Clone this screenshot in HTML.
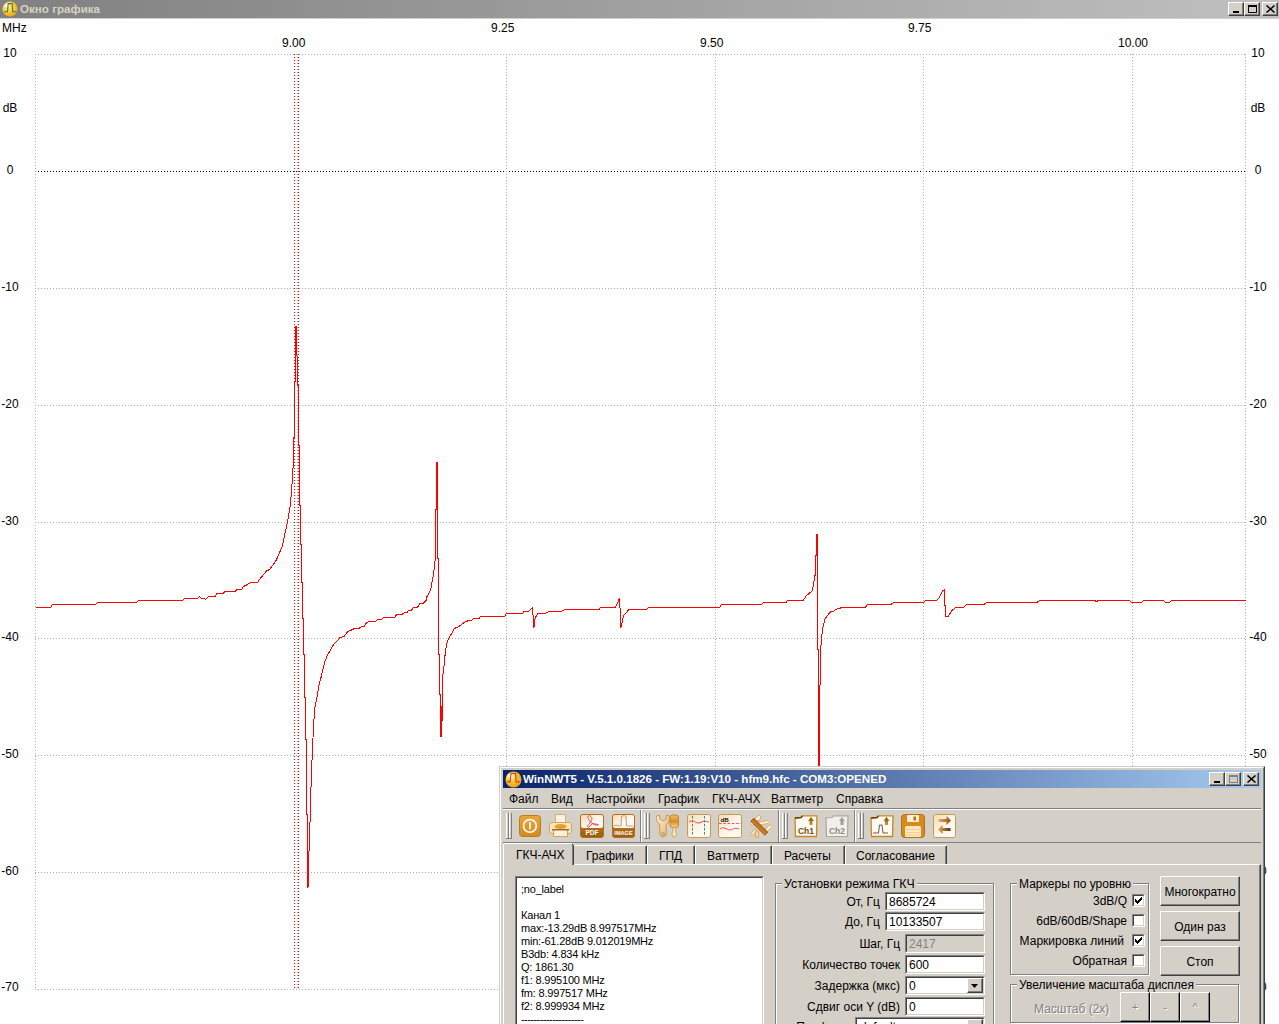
<!DOCTYPE html>
<html><head><meta charset="utf-8">
<style>
*{margin:0;padding:0;box-sizing:border-box}
html,body{width:1279px;height:1024px;overflow:hidden;background:#fff;font-family:"Liberation Sans",sans-serif;color:#000}
.a{position:absolute;white-space:nowrap}
.lbl{position:absolute;font-size:12px;line-height:14px;width:30px;text-align:center}
.dlg{position:absolute;left:499px;top:766px;width:766px;height:300px;background:#d4d0c8;
 border-top:1px solid #d4d0c8;border-left:1px solid #d4d0c8;border-right:1px solid #404040;border-bottom:1px solid #404040}
.dlg .in{position:absolute;left:0;top:0;right:0;bottom:0;border-top:1px solid #fff;border-left:1px solid #fff;border-right:1px solid #808080;border-bottom:1px solid #808080}
.t12{font-size:12px;line-height:14px}
.btn{position:absolute;background:#d4d0c8;border-top:1px solid #fff;border-left:1px solid #fff;border-right:1px solid #404040;border-bottom:1px solid #404040}
.btn>i{position:absolute;left:0;top:0;right:0;bottom:0;border-right:1px solid #808080;border-bottom:1px solid #808080}
.edit{position:absolute;background:#fff;border-top:1px solid #808080;border-left:1px solid #808080;border-right:1px solid #fff;border-bottom:1px solid #fff}
.edit>i{position:absolute;left:0;top:0;right:0;bottom:0;border-top:1px solid #404040;border-left:1px solid #404040;border-right:1px solid #d4d0c8;border-bottom:1px solid #d4d0c8}
.grp{position:absolute;border:1px solid #808080;box-shadow:1px 1px 0 #fff inset, 1px 1px 0 #fff}
.grpt{position:absolute;background:#d4d0c8;padding:0 2px;font-size:12px;line-height:14px}
.chk{position:absolute;width:13px;height:13px;background:#fff;border-top:1px solid #808080;border-left:1px solid #808080;border-right:1px solid #fff;border-bottom:1px solid #fff}
.chk>i{position:absolute;left:0;top:0;right:0;bottom:0;border-top:1px solid #404040;border-left:1px solid #404040;border-right:1px solid #d4d0c8;border-bottom:1px solid #d4d0c8}
</style></head><body>
<!-- chart window title bar -->
<div class="a" style="left:0;top:0;width:1279px;height:18px;background:linear-gradient(to right,#808080,#c0c0c0)"></div>
<div class="a" style="left:0;top:18px;width:1279px;height:1px;background:#d4d0c8"></div>
<svg class="a" style="left:2px;top:1px" width="16" height="16" viewBox="0 0 16 16">
<defs><radialGradient id="yg" cx="0.35" cy="0.3" r="0.75"><stop offset="0" stop-color="#fff0b0"/><stop offset="0.55" stop-color="#fcc83a"/><stop offset="1" stop-color="#e8a018"/></radialGradient></defs>
<circle cx="8" cy="8" r="7.6" fill="url(#yg)"/>
<ellipse cx="4.8" cy="4.6" rx="2.2" ry="1.8" fill="#fffbe8" opacity="0.8"/><path d="M2,10.8 H5.5 L6.2,2.6 H10.3 L10.6,10.8 H14.6" fill="none" stroke="#2f8a3a" stroke-width="1.1"/>
</svg>
<div class="a" style="left:20px;top:2px;font-size:11.6px;line-height:14px;font-weight:bold;color:#d8d2c4">Окно графика</div>
<div class="btn" style="left:1228px;top:2px;width:16px;height:14px"><i></i><div class="a" style="left:4px;top:8px;width:6px;height:2px;background:#000"></div></div>
<div class="btn" style="left:1244px;top:2px;width:16px;height:14px"><i></i><div class="a" style="left:3px;top:2px;width:9px;height:8px;border:1px solid #000;border-top-width:2px"></div></div>
<div class="btn" style="left:1262px;top:2px;width:16px;height:14px"><i></i><svg class="a" style="left:3px;top:2px" width="9" height="8"><path d="M0.5,0.5 L8.5,7.5 M8.5,0.5 L0.5,7.5" stroke="#000" stroke-width="1.5"/></svg></div>
<!-- axis labels -->
<div class="a" style="left:2px;top:21px;font-size:12px;line-height:14px">MHz</div>
<div class="lbl" style="left:-5px;top:46px">10</div>
<div class="lbl" style="left:-5px;top:101px">dB</div>
<div class="lbl" style="left:-5px;top:163px">0</div>
<div class="lbl" style="left:-5px;top:280px">-10</div>
<div class="lbl" style="left:-5px;top:397px">-20</div>
<div class="lbl" style="left:-5px;top:514px">-30</div>
<div class="lbl" style="left:-5px;top:630px">-40</div>
<div class="lbl" style="left:-5px;top:747px">-50</div>
<div class="lbl" style="left:-5px;top:864px">-60</div>
<div class="lbl" style="left:-5px;top:980px">-70</div>
<div class="lbl" style="left:1243px;top:46px">10</div>
<div class="lbl" style="left:1243px;top:101px">dB</div>
<div class="lbl" style="left:1243px;top:163px">0</div>
<div class="lbl" style="left:1243px;top:280px">-10</div>
<div class="lbl" style="left:1243px;top:397px">-20</div>
<div class="lbl" style="left:1243px;top:514px">-30</div>
<div class="lbl" style="left:1243px;top:630px">-40</div>
<div class="lbl" style="left:1243px;top:747px">-50</div>
<div class="lbl" style="left:1243px;top:864px">-60</div>
<div class="lbl" style="left:1243px;top:980px">-70</div>
<div class="a" style="left:282px;top:36px;font-size:12px;line-height:14px">9.00</div>
<div class="a" style="left:491px;top:21px;font-size:12px;line-height:14px">9.25</div>
<div class="a" style="left:700px;top:36px;font-size:12px;line-height:14px">9.50</div>
<div class="a" style="left:908px;top:21px;font-size:12px;line-height:14px">9.75</div>
<div class="a" style="left:1118px;top:36px;font-size:12px;line-height:14px">10.00</div>
<svg width="1279" height="1024" style="position:absolute;left:0;top:0" shape-rendering="crispEdges">
<line x1="35" y1="54.5" x2="1246" y2="54.5" stroke="#acacac" stroke-width="1" stroke-dasharray="1 2"/>
<line x1="35" y1="171.5" x2="1246" y2="171.5" stroke="#000" stroke-width="1" stroke-dasharray="1 2"/>
<line x1="35" y1="288.5" x2="1246" y2="288.5" stroke="#acacac" stroke-width="1" stroke-dasharray="1 2"/>
<line x1="35" y1="405.5" x2="1246" y2="405.5" stroke="#acacac" stroke-width="1" stroke-dasharray="1 2"/>
<line x1="35" y1="522.5" x2="1246" y2="522.5" stroke="#acacac" stroke-width="1" stroke-dasharray="1 2"/>
<line x1="35" y1="638.5" x2="1246" y2="638.5" stroke="#acacac" stroke-width="1" stroke-dasharray="1 2"/>
<line x1="35" y1="755.5" x2="1246" y2="755.5" stroke="#acacac" stroke-width="1" stroke-dasharray="1 2"/>
<line x1="35" y1="872.5" x2="1246" y2="872.5" stroke="#acacac" stroke-width="1" stroke-dasharray="1 2"/>
<line x1="35" y1="989.5" x2="1246" y2="989.5" stroke="#acacac" stroke-width="1" stroke-dasharray="1 2"/>
<line x1="35.5" y1="54" x2="35.5" y2="990" stroke="#acacac" stroke-width="1" stroke-dasharray="1 2"/>
<line x1="297.5" y1="54" x2="297.5" y2="990" stroke="#acacac" stroke-width="1" stroke-dasharray="1 2"/>
<line x1="506.5" y1="54" x2="506.5" y2="990" stroke="#acacac" stroke-width="1" stroke-dasharray="1 2"/>
<line x1="715.5" y1="54" x2="715.5" y2="990" stroke="#acacac" stroke-width="1" stroke-dasharray="1 2"/>
<line x1="923.5" y1="54" x2="923.5" y2="990" stroke="#acacac" stroke-width="1" stroke-dasharray="1 2"/>
<line x1="1132.5" y1="54" x2="1132.5" y2="990" stroke="#acacac" stroke-width="1" stroke-dasharray="1 2"/>
<line x1="1245.5" y1="54" x2="1245.5" y2="990" stroke="#acacac" stroke-width="1" stroke-dasharray="1 2"/>
<line x1="294.5" y1="54" x2="294.5" y2="988" stroke="#f00" stroke-width="1" stroke-dasharray="1 2"/>
<line x1="298.5" y1="54" x2="298.5" y2="988" stroke="#f00" stroke-width="1" stroke-dasharray="1 2"/>
<path d="M35.5,607.5 L50.5,607.5 L52.5,604.5 L95.5,604.5 L97.5,602.5 L136.5,602.5 L138.5,600.5 L182.5,600.5 L184.5,598.5 L197.5,598.5 L199.5,596.5 L201.5,598.5 L204.5,598.5 L205.5,599.5 L208.5,596.5 L215.5,596.5 L216.5,593.5 L223.5,593.5 L224.5,591.5 L235.5,591.5 L236.5,589.5 L241.5,589.5 L243.5,586.5 L247.5,584.5 L250.5,582.5 L257.5,582.5 L259.5,579.5 L266.5,571.0 L269.5,569.5 L275.5,561.5 L277.5,557.5 L282.1,546.5 L283.5,540.5 L285.2,532.5 L287.5,521.5 L289.1,512.5 L290.5,503.5 L291.5,491.5 L292.5,477.5 L293.5,458.5 L293.5,437.5 L294.5,437.5 L294.5,381.5 L295.5,381.5 L295.5,326.5 L296.5,326.5 L296.5,355.5 L297.5,356.5 L297.5,385.5 L298.5,385.5 L298.5,445.5 L299.5,445.5 L299.5,505.5 L300.5,505.5 L300.5,544.5 L301.5,544.5 L301.5,582.5 L302.5,582.5 L302.5,618.5 L303.5,618.5 L303.5,654.5 L304.5,654.5 L304.5,697.5 L305.5,697.5 L305.5,739.5 L306.5,739.5 L306.5,814.5 L307.5,814.5 L307.5,887.5 L308.5,886.5 L308.5,863.5 L309.5,839.5 L310.5,806.5 L311.5,769.5 L312.5,751.5 L313.5,724.5 L315.0,707.5 L316.9,697.5 L319.1,684.5 L321.0,677.5 L322.9,669.5 L325.1,661.0 L327.8,654.5 L333.3,645.1 L340.1,637.5 L344.0,636.5 L347.9,631.5 L351.5,630.0 L355.7,628.0 L359.7,628.0 L362.0,626.1 L364.3,626.1 L366.3,622.9 L369.8,621.0 L376.1,621.0 L378.0,619.0 L381.9,619.0 L383.9,617.1 L394.8,617.1 L397.2,614.0 L402.7,614.0 L405.0,612.0 L407.3,612.0 L408.9,610.0 L411.6,610.0 L413.2,607.9 L417.1,607.9 L420.2,603.0 L423.4,603.0 L426.1,600.3 L426.9,596.8 L430.5,590.5 L433.3,575.5 L434.5,566.5 L435.5,555.5 L435.5,509.5 L436.5,509.5 L436.5,462.5 L437.5,462.5 L437.5,558.5 L438.5,558.5 L438.5,654.5 L439.5,654.5 L439.5,694.5 L440.5,694.5 L440.5,736.5 L441.5,736.5 L442.5,706.5 L442.5,677.5 L444.0,666.5 L445.1,654.5 L446.5,644.5 L448.5,638.5 L450.5,635.5 L454.5,628.5 L457.5,627.1 L460.5,625.5 L464.2,622.5 L467.5,621.0 L471.5,620.5 L473.5,618.5 L479.0,618.5 L480.5,616.5 L504.5,616.5 L506.5,613.5 L522.5,613.5 L524.0,611.5 L528.5,611.5 L532.5,607.5 L533.9,627.5 L535.2,617.5 L538.1,613.5 L545.5,613.5 L548.5,611.5 L561.5,611.5 L564.5,609.5 L599.0,609.5 L600.5,607.5 L615.5,607.5 L619.5,598.5 L621.0,627.5 L623.5,615.5 L629.1,609.5 L646.5,609.5 L648.5,607.5 L719.5,607.5 L721.5,604.5 L761.5,604.5 L763.5,602.5 L786.0,602.5 L787.5,600.5 L803.2,600.5 L806.5,595.5 L812.1,591.1 L813.5,584.2 L814.8,576.0 L815.5,574.5 L815.5,555.5 L816.5,555.5 L816.5,534.5 L817.5,534.5 L817.5,649.5 L818.5,649.5 L818.5,800.5 L819.5,800.5 L819.5,705.5 L821.0,645.5 L821.7,636.2 L823.0,627.3 L824.8,619.1 L829.9,612.2 L834.0,610.9 L835.3,609.5 L842.3,607.5 L865.2,607.5 L867.5,604.5 L891.0,604.5 L893.3,602.5 L923.8,602.5 L925.8,600.5 L936.3,600.5 L939.5,597.5 L942.5,590.5 L944.9,589.5 L944.9,603.5 L945.7,616.5 L948.0,616.5 L951.9,610.5 L955.8,607.5 L963.5,607.5 L966.8,604.5 L983.9,604.5 L986.3,602.5 L1037.1,602.5 L1039.5,600.5 L1094.5,600.5 L1096.5,601.5 L1098.5,600.5 L1129.5,600.5 L1131.5,602.5 L1141.5,602.5 L1143.5,600.5 L1163.5,600.5 L1165.5,602.5 L1169.5,602.5 L1171.5,600.5 L1245.5,600.5" fill="none" stroke="#f00" stroke-width="1" shape-rendering="crispEdges"/>
<rect x="295" y="326" width="2" height="30" fill="#f00"/>
<rect x="436" y="462" width="2" height="47" fill="#f00"/>
<rect x="816" y="534" width="2" height="21" fill="#f00"/>
<rect x="440" y="706" width="2" height="31" fill="#f00"/>
</svg><div class="a" style="left:499px;top:766px;width:766px;height:260px;background:#d4d0c8;border-left:1px solid #d4d0c8;border-top:1px solid #d4d0c8;border-right:1px solid #404040"></div>
<div class="a" style="left:500px;top:767px;width:764px;height:260px;background:#d4d0c8;border-left:1px solid #fff;border-top:1px solid #fff;border-right:1px solid #808080"></div>
<div class="a" style="left:503px;top:770px;width:758px;height:18px;background:linear-gradient(to right,#0a246a,#a6caf0);"></div>
<svg class="a" style="left:505px;top:771px" width="17" height="17" viewBox="0 0 17 17">
<defs><radialGradient id="og" cx="0.35" cy="0.3" r="0.8"><stop offset="0" stop-color="#fff8d0"/><stop offset="0.45" stop-color="#fcc030"/><stop offset="1" stop-color="#e4a012"/></radialGradient></defs>
<circle cx="8.5" cy="8.5" r="8" fill="url(#og)"/>
<ellipse cx="5" cy="5" rx="2.3" ry="1.9" fill="#fffbe8" opacity="0.8"/><path d="M2,10.8 H5 L6,2.4 H10.5 L11.1,10.8 H14.8" fill="none" stroke="#c0502a" stroke-width="1.2"/>
</svg>
<div class="a" style="left:523px;top:772px;font-size:11.6px;line-height:14px;font-weight:bold;color:#fff">WinNWT5 - V.5.1.0.1826 - FW:1.19:V10 - hfm9.hfc - COM3:OPENED</div>
<div class="btn" style="left:1209px;top:772px;width:16px;height:14px"><i></i><div class="a" style="left:4px;top:8px;width:6px;height:2px;background:#000"></div></div>
<div class="btn" style="left:1225px;top:772px;width:16px;height:14px"><i></i><div class="a" style="left:3px;top:2px;width:9px;height:8px;border:1px solid #808080;border-top-width:2px"></div></div>
<div class="btn" style="left:1243px;top:772px;width:16px;height:14px"><i></i><svg class="a" style="left:3px;top:2px" width="9" height="8"><path d="M0.5,0.5 L8.5,7.5 M8.5,0.5 L0.5,7.5" stroke="#000" stroke-width="1.5"/></svg></div>
<div class="a" style="left:509px;top:792px;font-size:12px;line-height:14px;">Файл</div>
<div class="a" style="left:551px;top:792px;font-size:12px;line-height:14px;">Вид</div>
<div class="a" style="left:586px;top:792px;font-size:12px;line-height:14px;">Настройки</div>
<div class="a" style="left:658px;top:792px;font-size:12px;line-height:14px;">График</div>
<div class="a" style="left:712px;top:792px;font-size:12px;line-height:14px;">ГКЧ-АЧХ</div>
<div class="a" style="left:771px;top:792px;font-size:12px;line-height:14px;">Ваттметр</div>
<div class="a" style="left:836px;top:792px;font-size:12px;line-height:14px;">Справка</div>
<div class="a" style="left:503px;top:808px;width:758px;height:1px;background:#808080;"></div>
<div class="a" style="left:503px;top:809px;width:758px;height:1px;background:#fff;"></div>
<div class="a" style="left:503px;top:842px;width:758px;height:1px;background:#808080;"></div>
<div class="a" style="left:640px;top:810px;width:1px;height:32px;background:#808080;"></div>
<div class="a" style="left:641px;top:810px;width:1px;height:32px;background:#fff;"></div>
<div class="a" style="left:778px;top:810px;width:1px;height:32px;background:#808080;"></div>
<div class="a" style="left:779px;top:810px;width:1px;height:32px;background:#fff;"></div>
<div class="a" style="left:854px;top:810px;width:1px;height:32px;background:#808080;"></div>
<div class="a" style="left:855px;top:810px;width:1px;height:32px;background:#fff;"></div>
<div class="a" style="left:506px;top:813px;width:1px;height:25px;background:#fff;"></div>
<div class="a" style="left:508px;top:813px;width:1px;height:26px;background:#808080;"></div>
<div class="a" style="left:506px;top:838px;width:3px;height:1px;background:#808080;"></div>
<div class="a" style="left:509px;top:813px;width:1px;height:25px;background:#fff;"></div>
<div class="a" style="left:511px;top:813px;width:1px;height:26px;background:#808080;"></div>
<div class="a" style="left:509px;top:838px;width:3px;height:1px;background:#808080;"></div>
<div class="a" style="left:644px;top:813px;width:1px;height:25px;background:#fff;"></div>
<div class="a" style="left:646px;top:813px;width:1px;height:26px;background:#808080;"></div>
<div class="a" style="left:644px;top:838px;width:3px;height:1px;background:#808080;"></div>
<div class="a" style="left:647px;top:813px;width:1px;height:25px;background:#fff;"></div>
<div class="a" style="left:649px;top:813px;width:1px;height:26px;background:#808080;"></div>
<div class="a" style="left:647px;top:838px;width:3px;height:1px;background:#808080;"></div>
<div class="a" style="left:782px;top:813px;width:1px;height:25px;background:#fff;"></div>
<div class="a" style="left:784px;top:813px;width:1px;height:26px;background:#808080;"></div>
<div class="a" style="left:782px;top:838px;width:3px;height:1px;background:#808080;"></div>
<div class="a" style="left:785px;top:813px;width:1px;height:25px;background:#fff;"></div>
<div class="a" style="left:787px;top:813px;width:1px;height:26px;background:#808080;"></div>
<div class="a" style="left:785px;top:838px;width:3px;height:1px;background:#808080;"></div>
<div class="a" style="left:858px;top:813px;width:1px;height:25px;background:#fff;"></div>
<div class="a" style="left:860px;top:813px;width:1px;height:26px;background:#808080;"></div>
<div class="a" style="left:858px;top:838px;width:3px;height:1px;background:#808080;"></div>
<div class="a" style="left:861px;top:813px;width:1px;height:25px;background:#fff;"></div>
<div class="a" style="left:863px;top:813px;width:1px;height:26px;background:#808080;"></div>
<div class="a" style="left:861px;top:838px;width:3px;height:1px;background:#808080;"></div><svg width="0" height="0" style="position:absolute"><defs>
<linearGradient id="gOr" x1="0" y1="0" x2="0" y2="1"><stop offset="0" stop-color="#e8a73a"/><stop offset="1" stop-color="#d48a1c"/></linearGradient>
<linearGradient id="gCr" x1="0" y1="0" x2="1" y2="1"><stop offset="0" stop-color="#f6dcb0"/><stop offset="0.6" stop-color="#fff8f0"/><stop offset="1" stop-color="#fffaf5"/></linearGradient>
<linearGradient id="gBr" x1="0" y1="0" x2="0" y2="1"><stop offset="0" stop-color="#d08a28"/><stop offset="1" stop-color="#9a5c10"/></linearGradient>
<linearGradient id="gTool" x1="0" y1="0" x2="1" y2="1"><stop offset="0" stop-color="#fff4e0"/><stop offset="1" stop-color="#e8b060"/></linearGradient>
<linearGradient id="gHandle" x1="0" y1="0" x2="0" y2="1"><stop offset="0" stop-color="#f0c070"/><stop offset="0.5" stop-color="#d8901c"/><stop offset="1" stop-color="#f4d090"/></linearGradient>
<linearGradient id="gArr" x1="0" y1="0" x2="1" y2="0"><stop offset="0" stop-color="#e8b060"/><stop offset="1" stop-color="#8a5010"/></linearGradient>
<linearGradient id="gArr2" x1="1" y1="0" x2="0" y2="0"><stop offset="0" stop-color="#5a3008"/><stop offset="1" stop-color="#e8b060"/></linearGradient>
<linearGradient id="gArrU" x1="0" y1="0" x2="0" y2="1"><stop offset="0" stop-color="#7a4a10"/><stop offset="1" stop-color="#e09a30"/></linearGradient>
</defs></svg>
<svg class="a" style="left:519px;top:815px" width="22" height="22" viewBox="0 0 22 22"><rect x="0.5" y="0.5" width="21" height="21" rx="3" fill="url(#gOr)" stroke="#c07a18"/><circle cx="10.9" cy="10.9" r="6.4" fill="none" stroke="#fff" stroke-width="1.6"/><rect x="10.2" y="6.8" width="1.6" height="7.6" fill="#fff"/></svg>
<svg class="a" style="left:549px;top:814px" width="23" height="23" viewBox="0 0 23 23"><rect x="6.5" y="0.5" width="10" height="10" fill="#fff4e4" stroke="#e0b070"/><rect x="0.5" y="8.5" width="22" height="11" rx="2.5" fill="#fbe6c4" stroke="#e0a050"/><ellipse cx="11.5" cy="12.5" rx="6" ry="2.5" fill="#e3a030"/><rect x="4.5" y="15.5" width="14" height="7" fill="#fff0dc" stroke="#d8a050"/><rect x="3" y="15" width="17" height="1.5" fill="#9a6a30"/></svg>
<svg class="a" style="left:580px;top:814px" width="24" height="24" viewBox="0 0 24 24"><rect x="0.5" y="0.5" width="23" height="23" rx="2.5" fill="url(#gBr)" stroke="#b07020"/><rect x="1" y="1" width="22" height="13" rx="2" fill="url(#gCr)"/><path d="M8.5,2 C7,3 8.5,6 11.5,9 L15,11 C17,11 19.5,11.5 18,10.5 L12.5,9.5 L9,13 C8,14 6,13 10,9 L12,5 C12,3 10,1 8.5,2" fill="none" stroke="#e8404a" stroke-width="0.9"/><text x="12" y="21.3" font-family="Liberation Sans" font-weight="bold" font-size="6.5" fill="#fff" text-anchor="middle">PDF</text></svg>
<svg class="a" style="left:612px;top:814px" width="23" height="24" viewBox="0 0 23 24"><rect x="0.5" y="0.5" width="22" height="23" rx="2.5" fill="url(#gBr)" stroke="#b07020"/><rect x="1" y="1" width="21" height="13" rx="2" fill="url(#gCr)"/><path d="M1.5,12 L4,11 L7,12 L9,12 L9.5,2.5 L12,1.5 L14,2.5 L14.5,12 L16.5,12 L19,12 L21,12" fill="none" stroke="#b89870" stroke-width="0.9"/><text x="11.5" y="21.3" font-family="Liberation Sans" font-weight="bold" font-size="5.6" fill="#fff" text-anchor="middle">IMAGE</text></svg>
<svg class="a" style="left:656px;top:814px" width="24" height="24" viewBox="0 0 24 24"><path d="M1.2,1.5 C-0.2,5.5 1,9 3.8,10.2 L3.8,20 C3.8,23.8 10.2,23.8 10.2,20 L10.2,10.2 C13,9 14,5.5 12.8,1.5 L10.3,1.5 L10.3,5.2 L7,7 L3.7,5.2 L3.7,1.5 Z" fill="url(#gTool)" stroke="#c89040" stroke-width="0.9"/><circle cx="7" cy="20" r="1.3" fill="#fff6e8" stroke="#a07030" stroke-width="0.8"/><rect x="14" y="1" width="8.5" height="12.5" rx="2.5" fill="url(#gHandle)" stroke="#c08028" stroke-width="0.9"/><path d="M16.8,13.5 L16.8,17.5 L15.8,19.5 L16.8,23 L19.7,23 L20.7,19.5 L19.7,17.5 L19.7,13.5 Z" fill="#f8e2b8" stroke="#c89a50" stroke-width="0.8"/></svg>
<svg class="a" style="left:687px;top:814px" width="24" height="24" viewBox="0 0 24 24"><rect x="0.5" y="0.5" width="23" height="23" rx="2" fill="url(#gCr)" stroke="#c89a50"/><path d="M5.5,2 V22 M17.5,2 V22" stroke="#3a9060" stroke-width="1" stroke-dasharray="2.5 1.5"/><path d="M2,8 C5,6 7,7 9,8.5 C12,10 14,8 17,7 C19,7 20,8 22,8" fill="none" stroke="#e85060" stroke-width="1"/></svg>
<svg class="a" style="left:718px;top:814px" width="24" height="24" viewBox="0 0 24 24"><rect x="0.5" y="0.5" width="23" height="23" rx="2" fill="url(#gCr)" stroke="#c89a50"/><text x="2.5" y="7.5" font-family="Liberation Sans" font-weight="bold" font-size="6.2" fill="#111">dB</text><path d="M1,9.5 H23" stroke="#e85060" stroke-width="1" stroke-dasharray="2.5 1.8"/><path d="M2,15 C4,13.5 6,13.5 9,15 C11,16.5 13,16 15,15 C17,14 19,14 21,15" fill="none" stroke="#e85060" stroke-width="1"/></svg>
<svg class="a" style="left:749px;top:814px" width="24" height="24" viewBox="0 0 24 24"><path d="M10,0.8 L1.5,9.5 L3.5,11.5 L9,6 L10.5,6.5 L12,3 Z" fill="#fff4e6" stroke="#e0a050" stroke-width="0.9"/><path d="M8.5,8.5 L19.5,6.5 L21,8 L19,9.5 L10,11 Z" fill="#fff6ea" stroke="#e0a050" stroke-width="0.8"/><path d="M5,15 L1,21.5 L3,22 L7.5,17 Z" fill="#fde8c8" stroke="#e0a050" stroke-width="0.8"/><path d="M6.5,17 L6.5,23.5 L9.5,23.5 L9.5,17 Z" fill="#f6d498" stroke="#e0a050" stroke-width="0.8"/><path d="M15.5,20.5 L23,12.5 L21.5,11 L19,12 L17.5,14.5 L14.5,18 Z" fill="#fff4e6" stroke="#e0a050" stroke-width="0.8"/><path d="M1.8,7.2 L4.8,4.2 L18.8,18.2 L15.8,21.2 Z" fill="#c0701a" stroke="#9a5408" stroke-width="0.9" stroke-linejoin="round"/><path d="M3.5,7 L17,20.5" stroke="#e09848" stroke-width="0.8"/></svg>
<svg class="a" style="left:794px;top:815px" width="24" height="24" viewBox="0 0 24 24"><path d="M1,3 L7,2.5 L8.5,0.8 L23,0.8 L22.5,21.5 L1.5,21.5 Z" fill="#fffaf4" stroke="#c8881c" stroke-width="1.3"/><path d="M1,3 L7,2.5 L8.5,0.8" fill="none" stroke="#6a3a08" stroke-width="1.3"/><path d="M17,2 L20,6 L18.5,6 L18.5,10 L15.5,10 L15.5,6 L14,6 Z" fill="url(#gArrU)"/><text x="12" y="18.5" font-family="Liberation Sans" font-weight="bold" font-size="8.5" fill="#7a4a10" text-anchor="middle">Ch1</text></svg>
<svg class="a" style="left:825px;top:815px" width="24" height="24" viewBox="0 0 24 24"><path d="M1,3 L7,2.5 L8.5,0.8 L23,0.8 L22.5,21.5 L1.5,21.5 Z" fill="#f2efe8" stroke="#a8a8a4" stroke-width="1.2"/><path d="M17,2 L20,6 L18.5,6 L18.5,10 L15.5,10 L15.5,6 L14,6 Z" fill="#a0a0a0"/><text x="12" y="18.5" font-family="Liberation Sans" font-weight="bold" font-size="8.5" fill="#8a8a88" text-anchor="middle">Ch2</text></svg>
<svg class="a" style="left:870px;top:815px" width="24" height="24" viewBox="0 0 24 24"><path d="M1,3 L7,2.5 L8.5,0.8 L23,0.8 L22.5,21.5 L1.5,21.5 Z" fill="#fffaf4" stroke="#c8881c" stroke-width="1.3"/><path d="M1,3 L7,2.5 L8.5,0.8" fill="none" stroke="#6a3a08" stroke-width="1.3"/><path d="M16.5,2 L19.5,6 L18,6 L18,10 L15,10 L15,6 L13.5,6 Z" fill="url(#gArrU)"/><path d="M3,18 L8.5,18 L9.5,10 L12,10 L13,18 L18,18" fill="none" stroke="#5a4a3a" stroke-width="0.9"/></svg>
<svg class="a" style="left:901px;top:814px" width="24" height="24" viewBox="0 0 24 24"><rect x="0.5" y="0.5" width="23" height="23" rx="3" fill="#d88a1a" stroke="#b87010"/><rect x="6" y="1" width="12" height="7" rx="1" fill="#fff0d8"/><rect x="12.5" y="2.5" width="2.5" height="4" fill="#c07010"/><rect x="4" y="12" width="16" height="11" rx="1.5" fill="#ffe8c4"/><path d="M5,15.5 H19 M5,18.5 H19 M5,21 H19" stroke="#f4c880" stroke-width="0.8"/></svg>
<svg class="a" style="left:933px;top:814px" width="23" height="24" viewBox="0 0 23 24"><rect x="0.5" y="0.5" width="22" height="23" rx="2" fill="url(#gCr)" stroke="#c89a50"/><path d="M5.5,5 L13.5,5 L13.5,2 L18,6.5 L13.5,11 L13.5,8 L5.5,8 Z" fill="url(#gArr)"/><path d="M17.5,14 L9.5,14 L9.5,11 L5,15.5 L9.5,20 L9.5,17 L17.5,17 Z" fill="url(#gArr2)"/></svg><div class="a" style="left:503px;top:864px;width:758px;height:200px;background:#d4d0c8;border-top:1px solid #fff;border-left:1px solid #fff;border-right:1px solid #404040"></div>
<div class="a" style="left:1259px;top:865px;width:1px;height:200px;background:#808080;"></div>
<div class="a" style="left:574px;top:845px;width:73px;height:19px;background:#d4d0c8;border-top:1px solid #fff;border-right:1px solid #404040"></div>
<div class="a" style="left:645px;top:846px;width:1px;height:18px;background:#808080;"></div>
<div class="a" style="left:646px;top:845px;width:1px;height:1px;background:#d4d0c8;"></div>
<div class="a" style="left:586px;top:849px;font-size:12px;line-height:14px;">Графики</div>
<div class="a" style="left:647px;top:845px;width:48px;height:19px;background:#d4d0c8;border-top:1px solid #fff;border-left:1px solid #fff;border-right:1px solid #404040"></div>
<div class="a" style="left:693px;top:846px;width:1px;height:18px;background:#808080;"></div>
<div class="a" style="left:694px;top:845px;width:1px;height:1px;background:#d4d0c8;"></div>
<div class="a" style="left:647px;top:845px;width:1px;height:1px;background:#d4d0c8;"></div>
<div class="a" style="left:659px;top:849px;font-size:12px;line-height:14px;">ГПД</div>
<div class="a" style="left:695px;top:845px;width:77px;height:19px;background:#d4d0c8;border-top:1px solid #fff;border-left:1px solid #fff;border-right:1px solid #404040"></div>
<div class="a" style="left:770px;top:846px;width:1px;height:18px;background:#808080;"></div>
<div class="a" style="left:771px;top:845px;width:1px;height:1px;background:#d4d0c8;"></div>
<div class="a" style="left:695px;top:845px;width:1px;height:1px;background:#d4d0c8;"></div>
<div class="a" style="left:707px;top:849px;font-size:12px;line-height:14px;">Ваттметр</div>
<div class="a" style="left:772px;top:845px;width:73px;height:19px;background:#d4d0c8;border-top:1px solid #fff;border-left:1px solid #fff;border-right:1px solid #404040"></div>
<div class="a" style="left:843px;top:846px;width:1px;height:18px;background:#808080;"></div>
<div class="a" style="left:844px;top:845px;width:1px;height:1px;background:#d4d0c8;"></div>
<div class="a" style="left:772px;top:845px;width:1px;height:1px;background:#d4d0c8;"></div>
<div class="a" style="left:784px;top:849px;font-size:12px;line-height:14px;">Расчеты</div>
<div class="a" style="left:845px;top:845px;width:102px;height:19px;background:#d4d0c8;border-top:1px solid #fff;border-left:1px solid #fff;border-right:1px solid #404040"></div>
<div class="a" style="left:945px;top:846px;width:1px;height:18px;background:#808080;"></div>
<div class="a" style="left:946px;top:845px;width:1px;height:1px;background:#d4d0c8;"></div>
<div class="a" style="left:845px;top:845px;width:1px;height:1px;background:#d4d0c8;"></div>
<div class="a" style="left:856px;top:849px;font-size:12px;line-height:14px;">Согласование</div>
<div class="a" style="left:503px;top:843px;width:71px;height:22px;background:#d4d0c8;border-top:1px solid #fff;border-left:1px solid #fff;border-right:1px solid #404040"></div>
<div class="a" style="left:572px;top:845px;width:1px;height:20px;background:#808080;"></div>
<div class="a" style="left:573px;top:843px;width:1px;height:2px;background:#d4d0c8;"></div>
<div class="a" style="left:572px;top:843px;width:1px;height:1px;background:#d4d0c8;"></div>
<div class="a" style="left:572px;top:844px;width:1px;height:1px;background:#404040;"></div>
<div class="a" style="left:503px;top:843px;width:1px;height:1px;background:#d4d0c8;"></div>
<div class="a" style="left:516px;top:848px;font-size:12px;line-height:14px;">ГКЧ-АЧХ</div>
<div class="a" style="left:515px;top:876px;width:249px;height:160px;background:#fff;border-top:1px solid #808080;border-left:1px solid #808080;border-right:1px solid #fff"></div>
<div class="a" style="left:516px;top:877px;width:247px;height:160px;border-top:1px solid #404040;border-left:1px solid #404040;border-right:1px solid #d4d0c8"></div>
<div class="a" style="left:521px;top:882px;font-size:11px;line-height:14px;letter-spacing:-0.2px">;no_label</div>
<div class="a" style="left:521px;top:908px;font-size:11px;line-height:14px;letter-spacing:-0.2px">Канал 1</div>
<div class="a" style="left:521px;top:921px;font-size:11px;line-height:14px;letter-spacing:-0.2px">max:-13.29dB 8.997517MHz</div>
<div class="a" style="left:521px;top:934px;font-size:11px;line-height:14px;letter-spacing:-0.2px">min:-61.28dB 9.012019MHz</div>
<div class="a" style="left:521px;top:947px;font-size:11px;line-height:14px;letter-spacing:-0.2px">B3db: 4.834 kHz</div>
<div class="a" style="left:521px;top:960px;font-size:11px;line-height:14px;letter-spacing:-0.2px">Q: 1861.30</div>
<div class="a" style="left:521px;top:973px;font-size:11px;line-height:14px;letter-spacing:-0.2px">f1: 8.995100 MHz</div>
<div class="a" style="left:521px;top:986px;font-size:11px;line-height:14px;letter-spacing:-0.2px">fm: 8.997517 MHz</div>
<div class="a" style="left:521px;top:999px;font-size:11px;line-height:14px;letter-spacing:-0.2px">f2: 8.999934 MHz</div>
<div class="a" style="left:521px;top:1012px;font-size:11px;line-height:14px;letter-spacing:-0.55px">--------------------</div>
<div class="a" style="left:776px;top:884px;width:219px;height:159px;border:1px solid #fff"></div>
<div class="a" style="left:775px;top:883px;width:219px;height:159px;border:1px solid #808080"></div>
<div class="a" style="left:782px;top:877px;padding:0 2px;background:#d4d0c8;font-size:12.3px;line-height:14px">Установки режима ГКЧ</div>
<div class="edit" style="left:885px;top:892px;width:100px;height:19px;background:#fff"><i></i></div>
<div class="a" style="left:730px;top:895px;width:150px;text-align:right;font-size:12px;line-height:14px">От, Гц</div>
<div class="edit" style="left:885px;top:912px;width:100px;height:19px;background:#fff"><i></i></div>
<div class="a" style="left:730px;top:915px;width:150px;text-align:right;font-size:12px;line-height:14px">До, Гц</div>
<div class="edit" style="left:905px;top:934px;width:80px;height:19px;background:#d4d0c8"><i></i></div>
<div class="a" style="left:750px;top:937px;width:150px;text-align:right;font-size:12px;line-height:14px">Шаг, Гц</div>
<div class="edit" style="left:905px;top:955px;width:80px;height:19px;background:#fff"><i></i></div>
<div class="a" style="left:750px;top:958px;width:150px;text-align:right;font-size:12px;line-height:14px">Количество точек</div>
<div class="edit" style="left:905px;top:976px;width:80px;height:19px;background:#fff"><i></i></div>
<div class="a" style="left:750px;top:979px;width:150px;text-align:right;font-size:12px;line-height:14px">Задержка (мкс)</div>
<div class="edit" style="left:905px;top:997px;width:80px;height:19px;background:#fff"><i></i></div>
<div class="a" style="left:750px;top:1000px;width:150px;text-align:right;font-size:12px;line-height:14px">Сдвиг оси Y (dB)</div>
<div class="a" style="left:889px;top:895px;font-size:12px;line-height:14px;color:#000">8685724</div>
<div class="a" style="left:889px;top:915px;font-size:12px;line-height:14px;color:#000">10133507</div>
<div class="a" style="left:909px;top:937px;font-size:12px;line-height:14px;color:#808080">2417</div>
<div class="a" style="left:909px;top:958px;font-size:12px;line-height:14px;color:#000">600</div>
<div class="a" style="left:909px;top:979px;font-size:12px;line-height:14px;color:#000">0</div>
<div class="a" style="left:909px;top:1000px;font-size:12px;line-height:14px;color:#000">0</div>
<div class="btn" style="left:967px;top:978px;width:16px;height:15px"><i></i><svg class="a" style="left:3px;top:5px" width="9" height="5"><path d="M0,0 H7 L3.5,4 Z" fill="#000"/></svg></div>
<div class="edit" style="left:855px;top:1017px;width:130px;height:19px;background:#fff"><i></i></div>
<div class="btn" style="left:967px;top:1019px;width:16px;height:15px"><i></i></div>
<div class="a" style="left:648px;top:1020px;width:200px;text-align:right;font-size:12px;line-height:14px">Профиль</div>
<div class="a" style="left:860px;top:1020px;font-size:12px;line-height:14px;">default</div>
<div class="a" style="left:1011px;top:884px;width:139px;height:92px;border:1px solid #fff"></div>
<div class="a" style="left:1010px;top:883px;width:139px;height:92px;border:1px solid #808080"></div>
<div class="a" style="left:1017px;top:877px;padding:0 2px;background:#d4d0c8;font-size:12px;line-height:14px">Маркеры по уровню</div>
<div class="chk" style="left:1132px;top:894px"><i></i></div>
<svg class="a" style="left:1135px;top:897px" width="7" height="7" shape-rendering="crispEdges"><path d="M6,0h1v3h-1zM5,1h1v3h-1zM4,2h1v3h-1zM3,3h1v3h-1zM2,4h1v3h-1zM1,3h1v3h-1zM0,2h1v3h-1z" fill="#000"/></svg>
<div class="a" style="left:977px;top:894px;width:150px;text-align:right;font-size:12px;line-height:14px">3dB/Q</div>
<div class="chk" style="left:1132px;top:914px"><i></i></div>
<div class="a" style="left:977px;top:914px;width:150px;text-align:right;font-size:12px;line-height:14px">6dB/60dB/Shape</div>
<div class="chk" style="left:1132px;top:934px"><i></i></div>
<svg class="a" style="left:1135px;top:937px" width="7" height="7" shape-rendering="crispEdges"><path d="M6,0h1v3h-1zM5,1h1v3h-1zM4,2h1v3h-1zM3,3h1v3h-1zM2,4h1v3h-1zM1,3h1v3h-1zM0,2h1v3h-1z" fill="#000"/></svg>
<div class="a" style="left:974px;top:934px;width:150px;text-align:right;font-size:12px;line-height:14px">Маркировка линий</div>
<div class="chk" style="left:1132px;top:954px"><i></i></div>
<div class="a" style="left:977px;top:954px;width:150px;text-align:right;font-size:12px;line-height:14px">Обратная</div>
<div class="btn" style="left:1160px;top:876px;width:80px;height:30px;border-right-color:#404040;border-bottom-color:#404040"><i></i></div>
<div class="a" style="left:1160px;top:885px;width:80px;text-align:center;font-size:12px;line-height:14px">Многократно</div>
<div class="btn" style="left:1160px;top:911px;width:80px;height:30px;border-right-color:#404040;border-bottom-color:#404040"><i></i></div>
<div class="a" style="left:1160px;top:920px;width:80px;text-align:center;font-size:12px;line-height:14px">Один раз</div>
<div class="btn" style="left:1160px;top:946px;width:80px;height:30px;border-right-color:#404040;border-bottom-color:#404040"><i></i></div>
<div class="a" style="left:1160px;top:955px;width:80px;text-align:center;font-size:12px;line-height:14px">Стоп</div>
<div class="a" style="left:1011px;top:985px;width:229px;height:39px;border:1px solid #fff"></div>
<div class="a" style="left:1010px;top:984px;width:229px;height:39px;border:1px solid #808080"></div>
<div class="a" style="left:1017px;top:978px;padding:0 2px;background:#d4d0c8;font-size:12px;line-height:14px">Увеличение масштаба дисплея</div>
<div class="a" style="left:1034px;top:1002px;font-size:12px;line-height:14px;color:#808080;text-shadow:1px 1px 0 #fff">Масштаб (2x)</div>
<div class="btn" style="left:1120px;top:992px;width:30px;height:30px;border-right-color:#000;border-bottom-color:#000"><i></i></div>
<div class="a" style="left:1120px;top:1000px;width:30px;text-align:center;font-size:11px;line-height:14px;color:#808080;text-shadow:1px 1px 0 #fff">+</div>
<div class="btn" style="left:1150px;top:992px;width:30px;height:30px;border-right-color:#000;border-bottom-color:#000"><i></i></div>
<div class="a" style="left:1150px;top:1000px;width:30px;text-align:center;font-size:11px;line-height:14px;color:#808080;text-shadow:1px 1px 0 #fff">-</div>
<div class="btn" style="left:1180px;top:992px;width:30px;height:30px;border-right-color:#000;border-bottom-color:#000"><i></i></div>
<div class="a" style="left:1180px;top:1000px;width:30px;text-align:center;font-size:11px;line-height:14px;color:#808080;text-shadow:1px 1px 0 #fff">^</div></body></html>
